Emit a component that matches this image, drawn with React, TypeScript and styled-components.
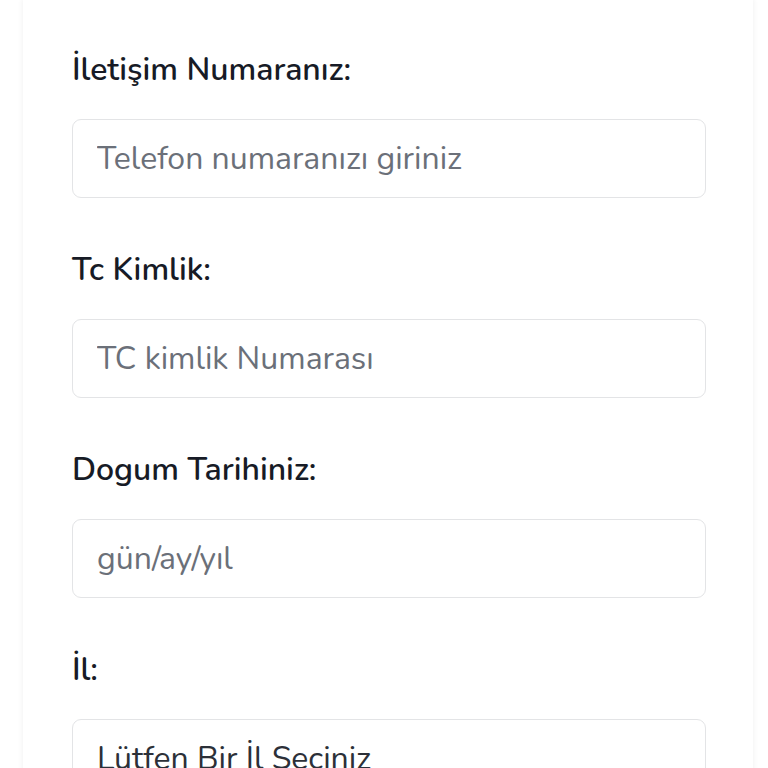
import styled, { createGlobalStyle } from "styled-components";

const GlobalStyle = createGlobalStyle`
  html, body {
    margin: 0;
    padding: 0;
    background: #ffffff;
    overflow: hidden;
  }
  * {
    box-sizing: border-box;
  }
`;

const fields = [
  { label: "İletişim Numaranız:", placeholder: "Telefon numaranızı giriniz" },
  { label: "Tc Kimlik:", placeholder: "TC kimlik Numarası" },
  { label: "Dogum Tarihiniz:", placeholder: "gün/ay/yıl" },
];

export default function App() {
  return (
    <>
      <GlobalStyle />
      <Card>
        <Form>
          {fields.map((f) => (
            <Field key={f.label}>
              <Label>{f.label}</Label>
              <Input type="text" placeholder={f.placeholder} />
            </Field>
          ))}
          <Field>
            <Label>İl:</Label>
            <Select>Lütfen Bir İl Seciniz</Select>
          </Field>
        </Form>
      </Card>
    </>
  );
}

const Card = styled.div`
  margin-left: 23px;
  width: 730px;
  min-height: 900px;
  background: #ffffff;
  box-shadow: 0 0 5px 1px rgba(0, 0, 0, 0.05);
`;

const Form = styled.form`
  display: flex;
  flex-direction: column;
  gap: 52px;
  padding: 50px 47px 0 49px;
`;

const Field = styled.div`
  display: flex;
  flex-direction: column;
  gap: 29px;
`;

const Label = styled.label`
  font-family: "Nunito", "Lato", "Open Sans", sans-serif;
  font-size: 32px;
  line-height: 40px;
  font-weight: 600;
  color: #171b26;
`;

const Input = styled.input`
  height: 79px;
  width: 100%;
  border: 1.5px solid #e3e4e6;
  border-radius: 9px;
  padding: 0 24px;
  background: #ffffff;
  font-family: "Nunito", "Lato", "Open Sans", sans-serif;
  font-size: 32px;
  color: #2c3038;
  outline: none;

  &::placeholder {
    color: #6b7079;
  }
`;

const Select = styled.div`
  height: 79px;
  width: 100%;
  border: 1.5px solid #e3e4e6;
  border-radius: 9px;
  padding: 0 24px;
  display: flex;
  align-items: center;
  font-family: "Nunito", "Lato", "Open Sans", sans-serif;
  font-size: 32px;
  color: #2c3038;
`;
